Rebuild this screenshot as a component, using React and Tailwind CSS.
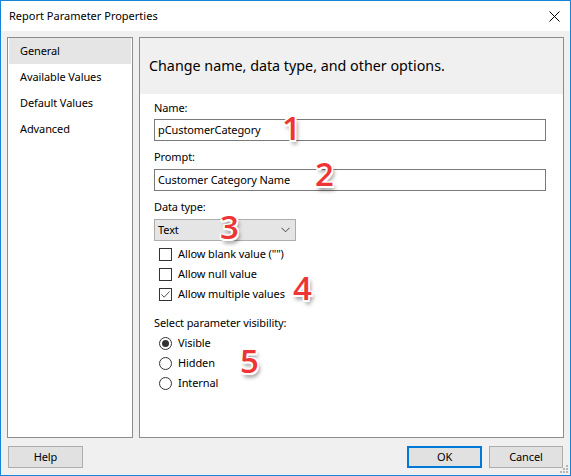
import React from "react";

const font = { fontFamily: '"Noto Sans", "Segoe UI", sans-serif' };

function Num({ n, left, top }) {
  return (
    <div
      className="absolute text-[33px] leading-none text-[#ee3535]"
      style={{
        left,
        top,
        fontFamily: '"Open Sans", "Liberation Sans", Arial, sans-serif',
        fontWeight: 600,
        textShadow:
          "1.5px 0 0 #fff,-1.5px 0 0 #fff,0 1.5px 0 #fff,0 -1.5px 0 #fff,1.5px 1.5px 0 #fff,-1.5px -1.5px 0 #fff,1.5px -1.5px 0 #fff,-1.5px 1.5px 0 #fff,2px 4px 4px rgba(0,0,0,0.5)",
      }}
    >
      {n}
    </div>
  );
}

function Check({ label, checked }) {
  return (
    <div className="flex h-[20px] items-center pl-[5px]">
      <div className="flex h-[13px] w-[13px] items-center justify-center border border-[#333] bg-white">
        {checked && (
          <svg width="11" height="11" viewBox="0 0 11 11">
            <path d="M1.5 5.5 L4.2 8.2 L9.5 2.5" fill="none" stroke="#555" strokeWidth="1" />
          </svg>
        )}
      </div>
      <span className="ml-[6px] text-black">{label}</span>
    </div>
  );
}

function Radio({ label, checked }) {
  return (
    <div className="flex h-[20px] items-center pl-[5px]">
      <div className="flex h-[13px] w-[13px] items-center justify-center rounded-full border border-[#333] bg-white">
        {checked && <div className="h-[7px] w-[7px] rounded-full bg-[#333]" />}
      </div>
      <span className="ml-[6px] text-black">{label}</span>
    </div>
  );
}

export default function App() {
  return (
    <div
      className="relative flex h-[476px] w-[571px] flex-col border border-[#1883d7] bg-[#f0f0f0] text-[11px] tracking-[-0.1px] text-black"
      style={font}
    >
      {/* Title bar */}
      <div className="flex h-[30px] shrink-0 items-center justify-between bg-white pl-[8px] pr-[9px]">
        <span className="tracking-normal">Report Parameter Properties</span>
        <svg width="11" height="11" viewBox="0 0 11 11" className="mr-[1px]">
          <path d="M0.5 0.5 L10.5 10.5 M10.5 0.5 L0.5 10.5" stroke="#000" strokeWidth="1" />
        </svg>
      </div>

      {/* Body */}
      <div className="flex h-[401px] shrink-0 gap-[6px] px-[6px] pt-[6px] box-content">
        {/* Nav */}
        <div className="flex h-[401px] w-[126px] shrink-0 flex-col border border-[#8c8c8c] bg-white">
          <div className="mx-[1px] flex h-[26px] items-center bg-[#e5e5e5] pl-[11px] pt-[1px]">General</div>
          <div className="flex h-[26px] items-center pl-[12px] pt-[1px]">Available Values</div>
          <div className="flex h-[26px] items-center pl-[12px] pt-[1px]">Default Values</div>
          <div className="flex h-[26px] items-center pl-[12px] pt-[1px]">Advanced</div>
        </div>

        {/* Right panel */}
        <div className="flex h-[401px] w-[425px] shrink-0 flex-col border border-[#8c8c8c] bg-white">
          <div className="flex h-[56px] shrink-0 items-center bg-[#f0f0f0] pl-[9px] text-[14.3px] tracking-normal">
            Change name, data type, and other options.
          </div>
          <div className="flex flex-col pl-[14px]">
            <div className="mt-[6px] h-[16px] leading-[16px]">Name:</div>
            <div className="mt-[3px] flex h-[22px] w-[392px] items-center border border-[#7a7a7a] pl-[3px]">
              pCustomerCategory
            </div>
            <div className="mt-[8px] h-[16px] leading-[16px]">Prompt:</div>
            <div className="mt-[4px] flex h-[22px] w-[392px] items-center border border-[#7a7a7a] pl-[3px]">
              Customer Category Name
            </div>
            <div className="mt-[8px] h-[16px] leading-[16px]">Data type:</div>
            <div className="mt-[4px] flex h-[22px] w-[142px] items-center justify-between border border-[#adadad] bg-[#e5e5e5] pl-[3px] pr-[5px]">
              <span>Text</span>
              <svg width="9" height="6" viewBox="0 0 9 6">
                <path d="M0.5 0.8 L4.5 4.8 L8.5 0.8" fill="none" stroke="#444" strokeWidth="1" />
              </svg>
            </div>
            <div className="mt-[3px] flex flex-col">
              <Check label={'Allow blank value ("")'} />
              <Check label="Allow null value" />
              <Check label="Allow multiple values" checked />
            </div>
            <div className="mt-[11px] h-[16px] leading-[16px]">Select parameter visibility:</div>
            <div className="mt-[2px] flex flex-col">
              <Radio label="Visible" checked />
              <Radio label="Hidden" />
              <Radio label="Internal" />
            </div>
          </div>
        </div>
      </div>

      {/* Buttons */}
      <div className="mt-[8px] flex h-[22px] shrink-0 items-center justify-between px-[7px]">
        <button className="h-[22px] w-[75px] border border-[#adadad] bg-[#e1e1e1]">Help</button>
        <div className="flex gap-[7px]">
          <button className="h-[22px] w-[75px] border-2 border-[#0078d7] bg-[#e1e1e1]">OK</button>
          <button className="h-[22px] w-[74px] border border-[#adadad] bg-[#e1e1e1]">Cancel</button>
        </div>
      </div>

      {/* Resize grip */}
      <svg className="absolute bottom-[2px] right-[2px]" width="8" height="8" viewBox="0 0 8 8">
        <rect x="6" y="0" width="2" height="2" fill="#b5b5b5" />
        <rect x="3" y="3" width="2" height="2" fill="#b5b5b5" />
        <rect x="6" y="3" width="2" height="2" fill="#b5b5b5" />
        <rect x="0" y="6" width="2" height="2" fill="#b5b5b5" />
        <rect x="3" y="6" width="2" height="2" fill="#b5b5b5" />
        <rect x="6" y="6" width="2" height="2" fill="#b5b5b5" />
      </svg>

      <Num n="1" left={281} top={110} />
      <Num n="2" left={314} top={156} />
      <Num n="3" left={219} top={209} />
      <Num n="4" left={292} top={270} />
      <Num n="5" left={239} top={343} />
    </div>
  );
}
